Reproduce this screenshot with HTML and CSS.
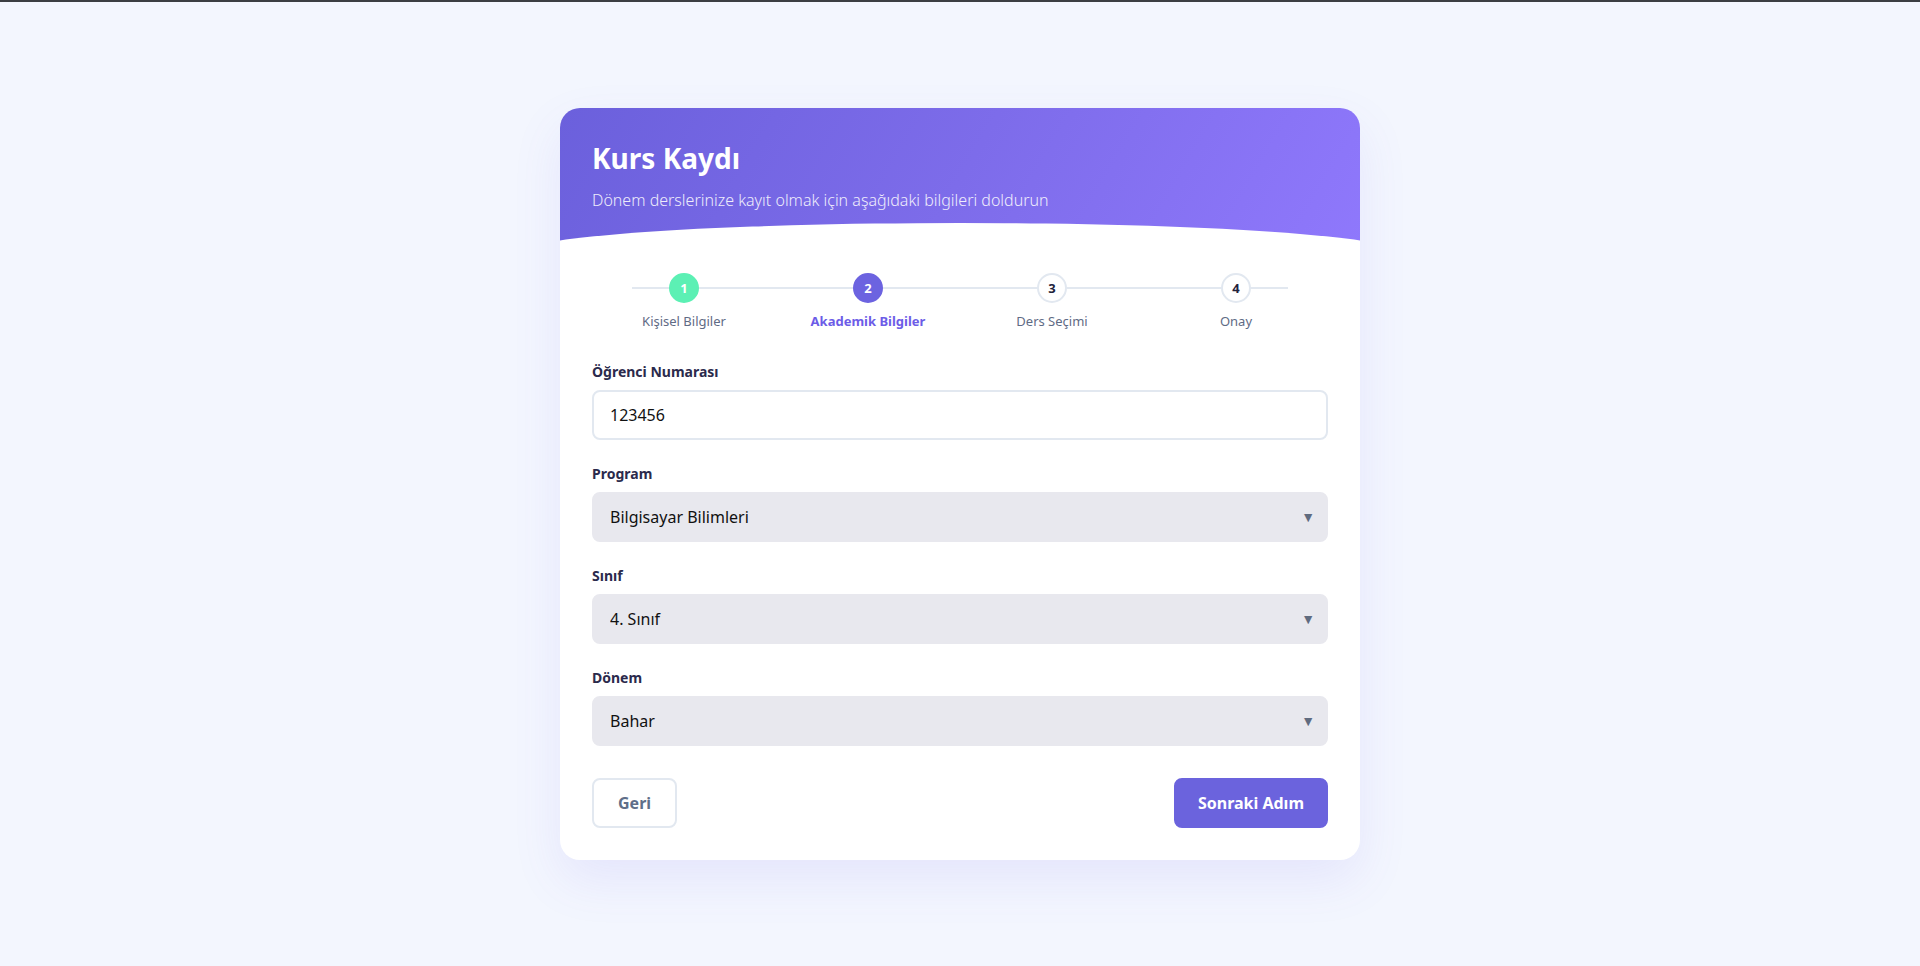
FILE: index.html
```html
<!DOCTYPE html>
<html lang="tr">
<head>
<meta charset="utf-8">
<title>Kurs Kaydı</title>
<link rel="stylesheet" href="styles.css">
</head>
<body>
<main class="page">
  <section class="card">
    <header class="card-header">
      <h1 class="title">Kurs Kaydı</h1>
      <p class="subtitle">Dönem derslerinize kayıt olmak için aşağıdaki bilgileri doldurun</p>
    </header>
    <div class="card-body">
      <ol class="steps">
        <li class="step done"><span class="dot">1</span><span class="step-label">Kişisel Bilgiler</span></li>
        <li class="step active"><span class="dot">2</span><span class="step-label">Akademik Bilgiler</span></li>
        <li class="step"><span class="dot">3</span><span class="step-label">Ders Seçimi</span></li>
        <li class="step"><span class="dot">4</span><span class="step-label">Onay</span></li>
      </ol>
      <form class="form">
        <div class="group">
          <label class="label" for="no">Öğrenci Numarası</label>
          <input class="input" id="no" type="text" value="123456">
        </div>
        <div class="group">
          <label class="label" for="program">Program</label>
          <div class="select-wrap">
            <select class="select" id="program"><option>Bilgisayar Bilimleri</option></select>
          </div>
        </div>
        <div class="group">
          <label class="label" for="sinif">Sınıf</label>
          <div class="select-wrap">
            <select class="select" id="sinif"><option>4. Sınıf</option></select>
          </div>
        </div>
        <div class="group">
          <label class="label" for="donem">Dönem</label>
          <div class="select-wrap">
            <select class="select" id="donem"><option>Bahar</option></select>
          </div>
        </div>
        <div class="actions">
          <button type="button" class="btn btn-back">Geri</button>
          <button type="button" class="btn btn-next">Sonraki Adım</button>
        </div>
      </form>
    </div>
  </section>
</main>
</body>
</html>
```
FILE: styles.css
```css
* { box-sizing: border-box; }
html, body { margin: 0; padding: 0; }
body {
  background: #f3f6fe;
  border-top: 2px solid #3b3e43;
  font-family: "Noto Sans", "Open Sans", sans-serif;
  color: #1e1b3a;
}
.page {
  min-height: calc(100vh - 2px);
  display: flex;
  align-items: center;
  justify-content: center;
}
.card {
  width: 800px;
  background: #fff;
  border-radius: 20px;
  overflow: hidden;
  box-shadow: 0 20px 50px rgba(108, 92, 231, 0.10);
}
.card-header {
  position: relative;
  height: 145px;
  padding: 34px 32px 0;
  background: linear-gradient(120deg, #6b60dc 0%, #7d6cea 50%, #8f78fc 100%);
  color: #fff;
}
.card-header::after {
  content: "";
  position: absolute;
  left: -40px;
  right: -40px;
  bottom: -30px;
  height: 60px;
  background: #fff;
  border-radius: 50%;
}
.title {
  margin: 0;
  font-size: 28px;
  line-height: 1.2;
  font-weight: 700;
}
.subtitle {
  margin: 12px 0 0;
  font-size: 16px;
  line-height: 24px;
  font-weight: 300;
  opacity: 0.88;
}
.card-body {
  position: relative;
  padding: 20px 32px 32px;
}
.steps {
  position: relative;
  list-style: none;
  margin: 0 0 32px;
  padding: 0;
  display: grid;
  grid-template-columns: repeat(4, 1fr);
}
.steps::before {
  content: "";
  position: absolute;
  left: 40px;
  right: 40px;
  top: 14px;
  height: 2px;
  background: #e2e8f0;
}
.step {
  position: relative;
  display: flex;
  flex-direction: column;
  align-items: center;
}
.dot {
  width: 30px;
  height: 30px;
  border-radius: 50%;
  border: 2px solid #e2e8f0;
  background: #fff;
  color: #22223b;
  font-size: 13px;
  font-weight: 700;
  display: flex;
  align-items: center;
  justify-content: center;
}
.step.done .dot { background: #5cf0b4; border-color: #5cf0b4; color: #fff; }
.step.active .dot { background: #6c63e0; border-color: #6c63e0; color: #fff; }
.step-label {
  margin-top: 9px;
  font-size: 13px;
  line-height: 18px;
  color: #5f6b85;
}
.step.active .step-label { color: #6c5ce7; font-weight: 700; }
.form { margin: 0; }
.group { margin-bottom: 24px; }
.group:last-of-type { margin-bottom: 0; }
.label {
  display: block;
  margin-bottom: 8px;
  font-size: 14px;
  line-height: 20px;
  font-weight: 700;
  color: #2b2a4c;
}
.input, .select {
  display: block;
  width: 100%;
  height: 50px;
  padding: 0 16px;
  border: 2px solid #e2e8f0;
  border-radius: 8px;
  font-family: inherit;
  font-size: 16px;
  color: #111;
  background: #fff;
  outline: none;
}
.select {
  -webkit-appearance: none;
  appearance: none;
  background: #e8e8ee;
  border-color: #e8e8ee;
}
.select-wrap { position: relative; }
.select-wrap::after {
  content: "▼";
  position: absolute;
  right: 13px;
  top: 50%;
  transform: translateY(-50%);
  font-size: 14px;
  line-height: 1;
  color: #5f6b7f;
  pointer-events: none;
}
.actions {
  margin-top: 32px;
  display: flex;
  justify-content: space-between;
}
.btn {
  height: 50px;
  padding: 0 24px;
  border-radius: 8px;
  border: 2px solid #e2e8f0;
  font-family: inherit;
  font-size: 16px;
  font-weight: 700;
  cursor: pointer;
}
.btn-back { background: #fff; color: #5f6f89; }
.btn-next { padding: 0 22px; background: #6b63dd; border-color: #6b63dd; color: #fff; }
```
